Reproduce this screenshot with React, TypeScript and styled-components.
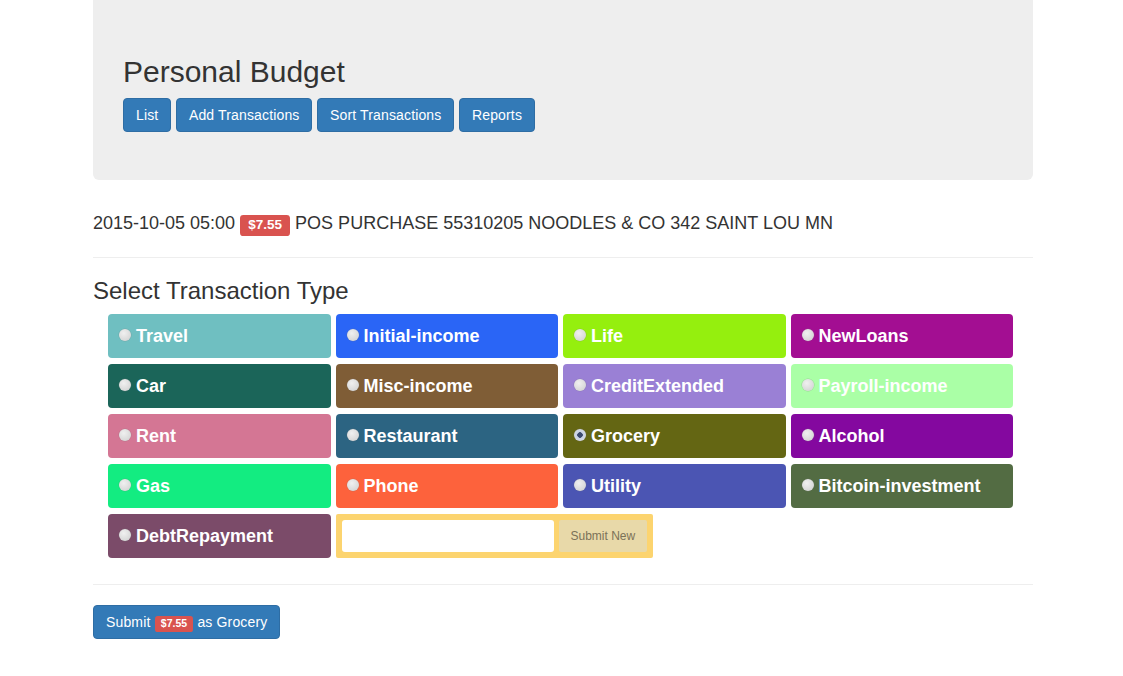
import React from "react";
import styled, { createGlobalStyle } from "styled-components";

const GlobalStyle = createGlobalStyle`
  html, body {
    margin: 0;
    padding: 0;
    background: #ffffff;
    color: #333333;
    font-family: "Liberation Sans", Arial, Helvetica, sans-serif;
    font-size: 14px;
    line-height: 1.42857;
  }
  * { box-sizing: border-box; }
`;

const Container = styled.div`
  width: 940px;
  margin-left: 93px;
`;

const Jumbotron = styled.div`
  background: #eeeeee;
  border-radius: 0 0 6px 6px;
  padding: 55px 30px 48px;
`;

const Title = styled.h2`
  margin: 0 0 10px;
  font-size: 30px;
  line-height: 33px;
  font-weight: 500;
  color: #333333;
`;

const NavRow = styled.div`
  display: flex;
  gap: 4.5px;
`;

const PrimaryButton = styled.button`
  font-family: inherit;
  font-size: 14px;
  line-height: 20px;
  letter-spacing: 0.15px;
  padding: 6px 12px;
  color: #ffffff;
  background: #337ab7;
  border: 1px solid #2e6da4;
  border-radius: 4px;
  cursor: pointer;
  white-space: nowrap;
`;

const TxLine = styled.div`
  margin-top: 33px;
  font-size: 18px;
  line-height: 20px;
  color: #333333;
`;

const Label = styled.span<{ $size: number }>`
  display: inline-block;
  font-size: ${(p) => p.$size}px;
  font-weight: 700;
  line-height: 1;
  letter-spacing: 0;
  color: #ffffff;
  background: #d9534f;
  padding: 0.2em 0.6em 0.3em;
  border-radius: 0.25em;
  vertical-align: baseline;
  white-space: nowrap;
`;

const Divider = styled.div<{ $top: number }>`
  border-top: 1px solid #eeeeee;
  margin-top: ${(p) => p.$top}px;
`;

const SectionTitle = styled.h3`
  margin: 20px 0 10px;
  font-size: 24px;
  line-height: 26.4px;
  font-weight: 500;
  color: #333333;
`;

const TileGrid = styled.div`
  margin-left: 15px;
  width: 905px;
  display: grid;
  grid-template-columns: repeat(4, 1fr);
  grid-auto-rows: 44px;
  column-gap: 5px;
  row-gap: 6px;
`;

const Tile = styled.label<{ $bg: string }>`
  display: flex;
  align-items: center;
  gap: 5px;
  padding: 0 11px;
  background: ${(p) => p.$bg};
  border-radius: 4px;
  color: #ffffff;
  font-size: 18px;
  font-weight: 700;
  line-height: 20px;
  cursor: pointer;
`;

const Radio = styled.span<{ $checked?: boolean }>`
  flex: none;
  width: 12px;
  height: 12px;
  border-radius: 50%;
  margin-top: -2px;
  background: ${(p) =>
    p.$checked
      ? "radial-gradient(circle, #3c4a6e 0 2.5px, #c9d2e6 3px, #dcdcdc 100%)"
      : "radial-gradient(circle at 40% 35%, #f0f0f0 0, #d8d8d8 70%, #c8c8c8 100%)"};
  box-shadow: 0 0 0 0.5px rgba(120, 120, 120, 0.35);
`;

const NewTypeBox = styled.div`
  grid-column: 2 / span 2;
  justify-self: start;
  display: flex;
  gap: 5px;
  padding: 6px;
  background: #fcd46f;
  border-radius: 2px;
`;

const NewTypeInput = styled.input`
  width: 212px;
  height: 32px;
  border: none;
  border-radius: 3px;
  background: #ffffff;
  padding: 0 8px;
  font-family: inherit;
  font-size: 14px;
  outline: none;
`;

const NewTypeButton = styled.button`
  height: 32px;
  padding: 0 12px;
  border: none;
  border-radius: 2px;
  background: #e8d9a9;
  color: #7b7258;
  font-family: inherit;
  font-size: 12px;
  cursor: pointer;
  white-space: nowrap;
`;

const SubmitRow = styled.div`
  margin-top: 20px;
`;

type TxType = { name: string; color: string; checked?: boolean };

const types: TxType[] = [
  { name: "Travel", color: "#6fbfc1" },
  { name: "Initial-income", color: "#2a65f6" },
  { name: "Life", color: "#95ef0e" },
  { name: "NewLoans", color: "#a30e92" },
  { name: "Car", color: "#1b6559" },
  { name: "Misc-income", color: "#7f5d36" },
  { name: "CreditExtended", color: "#9a80d5" },
  { name: "Payroll-income", color: "#aaffa6" },
  { name: "Rent", color: "#d47694" },
  { name: "Restaurant", color: "#2c6482" },
  { name: "Grocery", color: "#646613", checked: true },
  { name: "Alcohol", color: "#84089f" },
  { name: "Gas", color: "#13ec81" },
  { name: "Phone", color: "#fd623c" },
  { name: "Utility", color: "#4b55b3" },
  { name: "Bitcoin-investment", color: "#536c43" },
  { name: "DebtRepayment", color: "#7b4b69" },
];

export default function App() {
  return (
    <>
      <GlobalStyle />
      <Container>
        <Jumbotron>
          <Title>Personal Budget</Title>
          <NavRow>
            <PrimaryButton>List</PrimaryButton>
            <PrimaryButton>Add Transactions</PrimaryButton>
            <PrimaryButton>Sort Transactions</PrimaryButton>
            <PrimaryButton>Reports</PrimaryButton>
          </NavRow>
        </Jumbotron>

        <TxLine>
          2015-10-05 05:00 <Label $size={13.5}>$7.55</Label> POS PURCHASE 55310205 NOODLES &amp; CO 342 SAINT LOU MN
        </TxLine>

        <Divider $top={21} />

        <SectionTitle>Select Transaction Type</SectionTitle>

        <TileGrid>
          {types.map((t) => (
            <Tile key={t.name} $bg={t.color}>
              <Radio $checked={t.checked} />
              {t.name}
            </Tile>
          ))}
          <NewTypeBox>
            <NewTypeInput type="text" />
            <NewTypeButton>Submit New</NewTypeButton>
          </NewTypeBox>
        </TileGrid>

        <Divider $top={26} />

        <SubmitRow>
          <PrimaryButton>
            Submit <Label $size={10.5}>$7.55</Label> as Grocery
          </PrimaryButton>
        </SubmitRow>
      </Container>
    </>
  );
}
